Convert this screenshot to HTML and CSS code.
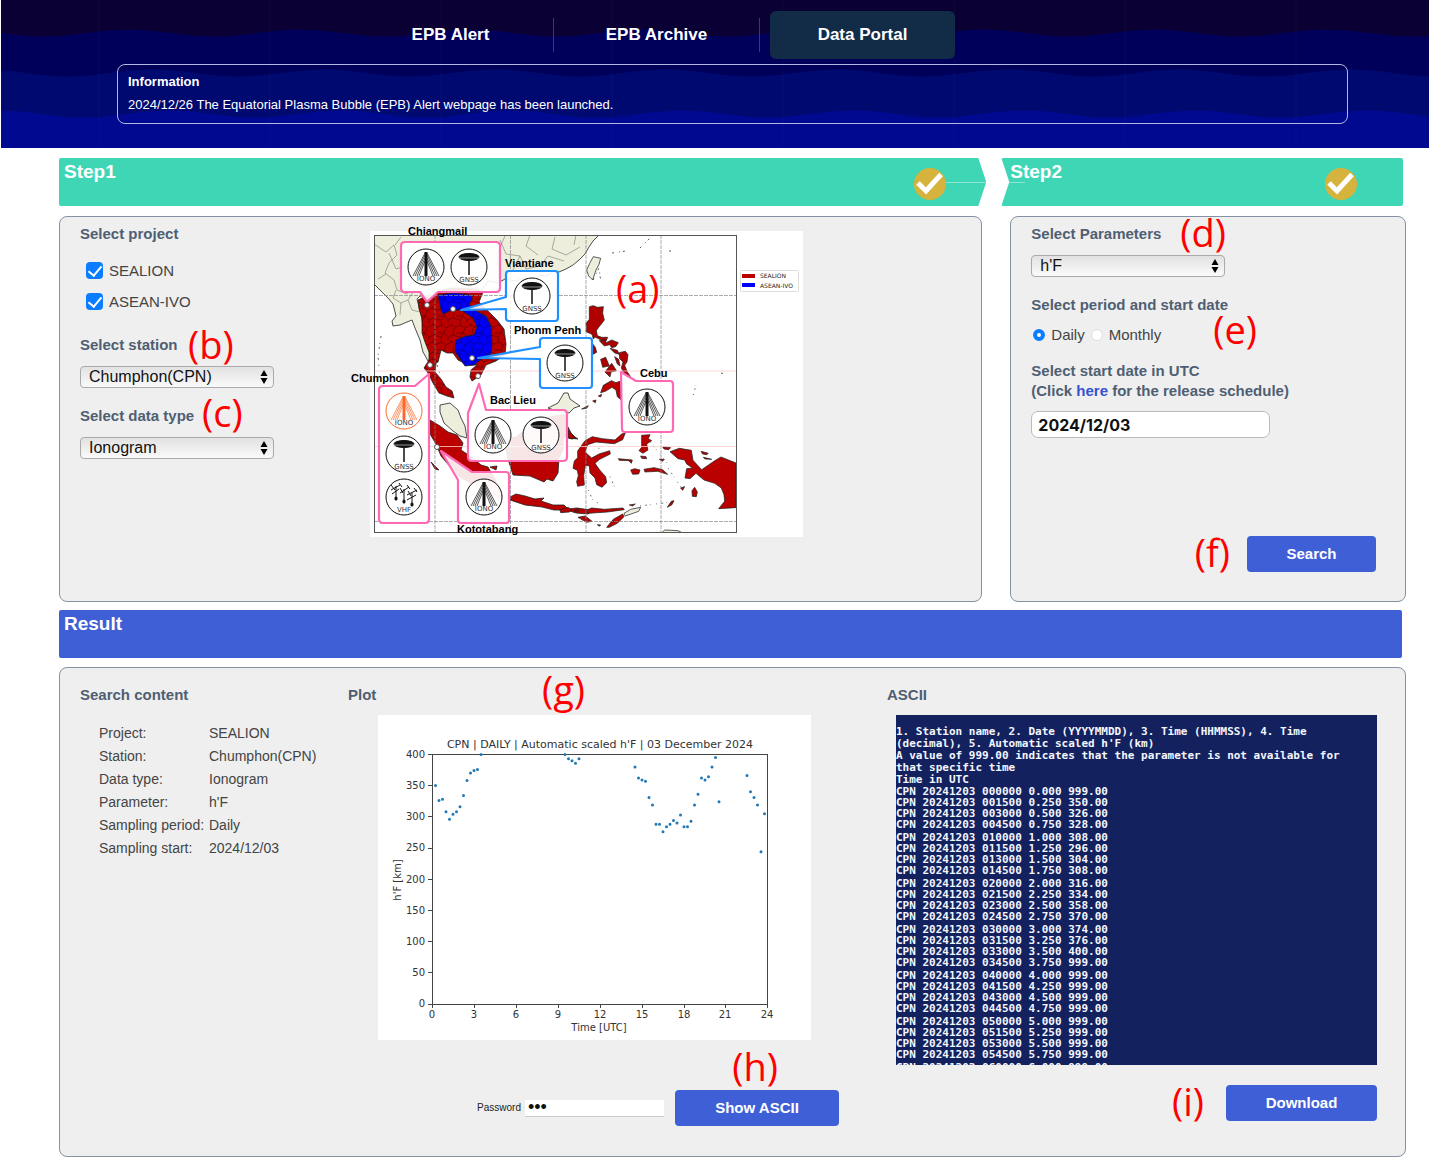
FILE: index.html
```html
<!DOCTYPE html>
<html lang="en">
<head>
<meta charset="utf-8">
<meta name="viewport" content="width=device-width, initial-scale=1">
<title>EPB Data Portal</title>
<link rel="stylesheet" href="styles.css">
</head>
<body>
<header class="masthead">
  <svg class="waves" aria-hidden="true">
    <defs>
      <pattern id="wave" width="171" height="148" patternUnits="userSpaceOnUse">
        <rect width="171" height="148" fill="#0b0033"/>
        <path fill="#00005a" d="M-86 33q42.75-7 85.5 0t85.5 0t85.5 0t85.5 0t85.5 0t85.5 0V148H-86z"/>
        <path fill="#000970" d="M-62 73q42.75-7 85.5 0t85.5 0t85.5 0t85.5 0t85.5 0t85.5 0V148H-62z"/>
        <path fill="#00098f" d="M-46 114q42.75-7 85.5 0t85.5 0t85.5 0t85.5 0t85.5 0t85.5 0V148H-46z"/>
        <path stroke="#fff" stroke-opacity=".025" d="M98 0V148"/>
      </pattern>
    </defs>
    <rect width="100%" height="100%" fill="url(#wave)"/>
  </svg>
  <nav class="nav">
    <a class="nav-link" href="#alert">EPB Alert</a>
    <a class="nav-link" href="#archive">EPB Archive</a>
    <a class="nav-link current" href="#portal">Data Portal</a>
  </nav>
  <section class="info">
    <h2>Information</h2>
    <p>2024/12/26 The Equatorial Plasma Bubble (EPB) Alert webpage has been launched.</p>
  </section>
</header>

<main class="portal" id="portal">
  <div class="steps">
    <div class="bar step-one">
      <h2>Step1</h2>
      <svg class="done" viewBox="0 0 32 32" aria-hidden="true"><circle cx="16" cy="16" r="16" fill="#d6b33c"/><path fill="none" stroke="#fff" stroke-width="5" d="M4 15l8 8L27 6.500"/></svg>
    </div>
    <div class="bar step-two">
      <h2>Step2</h2>
      <svg class="done" viewBox="0 0 32 32" aria-hidden="true"><circle cx="16" cy="16" r="16" fill="#d6b33c"/><path fill="none" stroke="#fff" stroke-width="5" d="M4 15l8 8L27 6.500"/></svg>
    </div>

    <form class="panel selection">
      <div class="fields">
        <h3>Select project</h3>
        <div class="checks">
          <label><input type="checkbox" checked>SEALION</label>
          <label><input type="checkbox" checked>ASEAN-IVO</label>
        </div>
        <label class="title" for="station">Select station</label>
        <div class="select">
          <select id="station"><option>Chumphon(CPN)</option></select>
          <svg viewBox="0 0 8 14" aria-hidden="true"><path d="M4 0l3.500 6h-7zM4 14l3.500-6h-7z"/></svg>
        </div>
        <label class="title" for="datatype">Select data type</label>
        <div class="select">
          <select id="datatype"><option>Ionogram</option></select>
          <svg viewBox="0 0 8 14" aria-hidden="true"><path d="M4 0l3.500 6h-7zM4 14l3.500-6h-7z"/></svg>
        </div>
      </div>
      <figure class="map">
        <svg viewBox="370 231 433 306" role="img" aria-label="Observation stations in Southeast Asia">
          <defs>
            <pattern id="redcells" width="19" height="17" patternUnits="userSpaceOnUse">
              <rect width="19" height="17" fill="#bb0000"/>
              <path fill="none" stroke="#400" stroke-width=".5" d="M0 4l5-2 4 3 5-3 5 2M5 2L4 0M9 5l-2 5 4 4 5-2 1-6 2-2M0 10l7 0M4 17l1-4 2-3M11 14v3M16 12l3 1M14 2l1-2M0 13l4 1"/>
            </pattern>
            <pattern id="bluecells" width="19" height="17" patternUnits="userSpaceOnUse">
              <rect width="19" height="17" fill="#0000fa"/>
              <path fill="none" stroke="#005" stroke-width=".5" d="M0 4l5-2 4 3 5-3 5 2M5 2L4 0M9 5l-2 5 4 4 5-2 1-6 2-2M0 10l7 0M4 17l1-4 2-3M11 14v3M16 12l3 1M14 2l1-2M0 13l4 1"/>
            </pattern>
            <clipPath id="frame"><rect x="374" y="235" width="363" height="298"/></clipPath>
            <g id="iono">
              <circle r="18" fill="#fff" fill-opacity=".8"/>
              <path fill="none" stroke-width=".7" d="M-1-14L-13 9M-1-12L-11 9M-1-9L-9 9M-1-6L-7 9M1-14L13 9M1-12L11 9M1-9L9 9M1-6L7 9"/>
              <path fill="none" stroke-width="3" d="M0-15V9"/>
              <text y="14" text-anchor="middle">IONO</text>
            </g>
            <g id="gnss">
              <circle r="18" fill="#fff" fill-opacity=".8"/>
              <ellipse cy="-10" rx="10" ry="3.500" fill="#111"/>
              <path stroke="#ccc" stroke-width=".7" d="M-10-9H10"/>
              <path stroke-width="1.500" d="M0-6V8"/>
              <text y="15" text-anchor="middle">GNSS</text>
            </g>
            <g id="vhf">
              <circle r="18" fill="#fff" fill-opacity=".8"/>
              <path fill="none" d="M-8-11V2M0-8V5M8-4V8M-13-7l9-5M-13-12l4 5M-5-14l3 4M-4-4l9-6M-4-9l3 5M3-12l3 4M3-2l10-5M4-6l3 5M10-9l3 4M-12-3l7-5M3 3l9-5"/>
              <path fill="none" stroke-width="3" stroke-linecap="round" d="M-8 1v1M0 4v1M8 7v1"/>
              <text y="15" text-anchor="middle">VHF</text>
            </g>
          </defs>

          <g clip-path="url(#frame)" stroke="#222" stroke-width=".8" stroke-linejoin="round">
            <path fill="#eeeedc" d="M374 234H600L593 241 589 247 585 254 579 260 573 265 566 269 559 272 554 271 547 276 540 275 535 279 526 278 515 281 505 279 498 283 488 281 480 293 420 296 417 299 420 310 424 330 427 345 431 357 428 361 423 352 420 340 415 328 412 320 407 322 400 325 393 326 392 321 396 316 393 304 388 298 381 291 374 284z"/>
            <path fill="none" stroke="#777" stroke-width=".6" d="M374 244l12 8 8-7 3 10-8 8-4 10 9 7 3 10 10 4 3-10 8-3 4-8M395 245l6-8M386 274l-8 5M396 290l-3 8 8 5 7-3 4 10 8 2M401 303l-1 12M408 300l6-10M500 240l6 14 14 2 6 13 14-3 8-10 16 5M530 235l-4 11 12 9M555 237l-3 12 14 6 14-8M505 236l-8 18 3 20M576 235l-2 10M520 256l-7 14M389 253l7 16 9-3"/>
            <path fill="url(#redcells)" d="M418 300l6-3 7 0 7-6 14-3 23 1 8 3-4 10 8 8 10 10 7 9 2 15-1 11-9 6-10 4-5 10-9 6-2-4 1-7 6-5-9 0-10-5-5-7-6 0-6-3-3 12-2 1-1 9 6 7 5 8 6 4 2 7-7-2-8-3-6-10-5-10-4-5 5-8 0-8-4-10-3-9 0-15-3-9z"/>
            <path fill="url(#bluecells)" d="M438 295l15-2 18 2 1 5-3 4 7 7 10 5 5 10 1 17-1 11-8 4-9 7-9 1-5-7-5-8 1-11 10-4 8-1 3-8-4-9-12-8-9 0-9 4-2-4z"/>
            <path fill="#eeeedc" d="M440 405l10-2 8 7 3 8 4 8 2 12-7-2-7-5-9-8-4-11z"/>
            <path fill="#bb0000" d="M430 420l10 6 8 6 9 3 6 8-2 7 12 8 8 7 7 2 7 12 8 17-3 4-18-10-24-14-17-20-5-12-6-10z"/>
            <path fill="#bb0000" d="M510 497l6-3 9 2 10 3 9-1-3 3 12 4 11 0 4 4 9-1 7 1 8 2-4 3-12-1-9-3-13 0-12-3-17-2-15-5zM431 462l8 8-4-1zM490 467l7-1-1 4zM504 438l12-1 12-10 20-10 18-3 0 14 10 10-4 1-8-2-1 13-4 8-1 15-5 8-6-2-3 3-14-6-17-1-5-16zM568 427l4 8 6 4-9-1z"/>
            <path fill="#eeeedc" d="M548 408l10-5 6-10 4 0 2 6 10 7-6 2-5 5-9-1z"/>
            <g transform="translate(560 220) scale(.3333)" stroke-width="2.200">
              <path fill="#eeeedc" d="M100 110l22 5-5 18-9 17-10 30-12-12-6-18 9-20z"/>
              <path fill="url(#redcells)" d="M88 260l12-3 12 5 18-2-2 20 5 20-9 12-8 10-7 10 3 15 13 5 18 0-5 12-13-3-20-10-5 6-4-14-18-8 1-12-1-13 10-12zM118 362l15-4 6 10 16-8 20 8-8 12-12 3-6-9-16 4zM178 398l18-4 8 10-3 22-7 10 8 20 14 20-18-6-14-26 5-18-10-10zM98 372l8 10 4 15-11 6zM122 418l15-6 6 14 5 12-20 4zM135 456l20-26 8 12 6 10-16 4-3 15zM164 410l12 8 4 20-8-6zM150 385l22 6 6 12-14-4z"/>
            </g>
            <g transform="translate(560 380) scale(.3333)" fill="#bb0000" stroke-width="2.200">
              <path d="M122 38l8-22 24-14 14 6 12-4 4 56-12-10-4-20-12-8-20 12zM98 63l10-3-2 8zM115 48l10-5-3 8zM65 87l20-10-5 8zM75 182l22-12 30 6 38 4 20-18 11-3-8 20-25 12-55-5-25 8-8 22 20 18 22-12 32-10 2 10-32 16-14 12 14 20 18 20 3 18-14 14-16-8-5-20-15-15-2-22-12 0-5 30 2 28-20 4-3-14 5-18-3-16-13-6 4-22 10-10 0-20zM245 166l25-2-5 12 10 6-15 10 4 18-15 10-12-8 8-10zM175 236l20 2 22 2-3 10-8-8-28-1zM242 228l16 2 2 6-15-1zM298 238l14 0-4 6zM212 270l12-4 16 4-4 12-18 1zM252 268l30-5 26 6 15 14-30-9-38 2zM308 200l24 3-6 6-14-2zM330 215l28-10 36 6 5 30 26 28 38-26 20-12 45 18v134l-52 3 18-22-2-20-8-20-20-14-32-10-24-20-18 16-15-2 5-28 18-2-18-12-6-12-20-4zM423 214l22 6-5 4-12-2zM430 232l25 6-20-1zM396 332l8-10 8 14-3 14-12-1zM362 324l12-4-6 11zM322 382l12-18 8-2-6 12zM0 390l24-8 12 8-8 6-26 2zM44 390l12-2 2 5-14 1zM75 392l20-8 38 4 56-4 4 5-50 7-58 4zM54 412l22-4 20 16-16 3zM140 442l20-24 28-16 4 8-20 20-24 12zM208 375l18-3-8 6zM112 434l10 1-4 4z"/>
              <path fill="#eeeedc" d="M192 400l20-12 30-6-6 12-40 14zM306 458l8-8 40 2 12 6z"/>
              <path fill="none" stroke="#333" stroke-dasharray="3 13 5 9 2 17" d="M240 378l80-10M270 185l60 75M325 265l40 60M85 330l15 35 20 5M150 290l20 45M400 45l8-30M115 205l15 0"/>
            </g>
            <path fill="none" stroke="#333" stroke-dasharray="2 5 1 3" d="M381 336l-3 20 1 12M593 280l6-12 2 15M612 253l14-2M640 248l12-12M669 251l3 0M437 365l3 9M721 373l4 1"/>
          </g>
          <g fill="none">
            <path stroke="#888" stroke-width=".7" stroke-dasharray="4 1" d="M435 235V533M510.500 235V533M586 235V533M661 235V533M374 295.500H737M374 521.500H737"/>
            <path stroke="#ffcaca" stroke-width=".8" d="M374 371H737M374 446.500H737"/>
            <rect x="374.500" y="235.500" width="362" height="297" stroke="#555"/>
          </g>

          <g fill="#fff" fill-opacity=".9" stroke-width="2.200" stroke-linejoin="round">
            <path stroke="#ff69b4" d="M405 242H496q4 0 4 4V288q0 4-4 4H438L427 302 420 292H405q-4 0-4-4V246q0-4 4-4z"/>
            <path stroke="#1e90ff" d="M509 271H555q3 0 3 3V318q0 3-3 3H509q-3 0-3-3V309L461 310 506 297V274q0-3 3-3z"/>
            <path stroke="#1e90ff" d="M543 338H589q3 0 3 3V385q0 3-3 3H543q-3 0-3-3V359L478 358 540 347V341q0-3 3-3z"/>
            <path stroke="#ff69b4" d="M382 386H415L429 374V519q0 4-4 4H383q-4 0-4-4V390q0-4 4-4z"/>
            <path stroke="#ff69b4" d="M486 410H563q4 0 4 4V457q0 4-4 4H472q-4 0-4-4V413L479 384z"/>
            <path stroke="#ff69b4" d="M636 381H670q3 0 3 3V429q0 3-3 3H625q-3 0-3-3L621 372z"/>
            <path stroke="#ff69b4" d="M472 472H506q3 0 3 3V520q0 3-3 3H461q-3 0-3-3V480L441 451z"/>
          </g>
          <g fill="#fff" stroke="#555">
            <circle cx="427" cy="305" r="2.500"/><circle cx="453" cy="309" r="2.500"/><circle cx="472" cy="358" r="2.500"/><circle cx="430" cy="365" r="2.500"/><circle cx="478" cy="376" r="2.500"/><circle cx="437" cy="447" r="2.500"/>
          </g>
          <g class="station-icons" stroke="#111">
            <use href="#iono" x="426" y="267"/><use href="#gnss" x="469" y="267"/>
            <use href="#gnss" x="532" y="296"/><use href="#gnss" x="565" y="363"/>
            <use href="#iono" x="404" y="411" class="active-icon"/><use href="#gnss" x="404" y="454"/><use href="#vhf" x="404" y="497"/>
            <use href="#iono" x="493" y="435"/><use href="#gnss" x="541" y="435"/>
            <use href="#iono" x="484" y="497"/><use href="#iono" x="647" y="407"/>
          </g>
          <g class="station-names">
            <text x="408" y="235">Chiangmail</text>
            <text x="505" y="267">Viantiane</text>
            <text x="514" y="334">Phonm Penh</text>
            <text x="351" y="382">Chumphon</text>
            <text x="640" y="377">Cebu</text>
            <text x="490" y="404">Bac Lieu</text>
            <text x="457" y="533">Kototabang</text>
          </g>
          <rect x="740.500" y="270.500" width="58" height="21" rx="1" fill="#fff" stroke="#ddd"/>
          <path fill="#bb0000" d="M742 274h13v4h-13z"/><path fill="#00f" d="M742 283h13v4h-13z"/>
          <g class="map-legend"><text x="760" y="278">SEALION</text><text x="760" y="288">ASEAN-IVO</text></g>
        </svg>
        <span class="mark mark-a">(a)</span>
      </figure>
      <span class="mark mark-b">(b)</span>
      <span class="mark mark-c">(c)</span>
    </form>

    <form class="panel parameters">
      <label class="title" for="parameter">Select Parameters</label>
      <div class="select">
        <select id="parameter"><option>h'F</option></select>
        <svg viewBox="0 0 8 14" aria-hidden="true"><path d="M4 0l3.500 6h-7zM4 14l3.500-6h-7z"/></svg>
      </div>
      <h3>Select period and start date</h3>
      <div class="radios">
        <label><input type="radio" name="period" checked>Daily</label>
        <label><input type="radio" name="period">Monthly</label>
      </div>
      <p class="title"><label for="start">Select start date in UTC</label><br>(Click <a href="#schedule">here</a> for the release schedule)</p>
      <input class="date" id="start" type="text" value="2024/12/03">
      <button class="button search" type="button">Search</button>
      <span class="mark mark-d">(d)</span>
      <span class="mark mark-e">(e)</span>
      <span class="mark mark-f">(f)</span>
    </form>
  </div>

  <div class="bar result-bar"><h2>Result</h2></div>

  <section class="panel result">
    <div>
      <h3>Search content</h3>
      <dl class="summary">
        <dt>Project:</dt><dd>SEALION</dd>
        <dt>Station:</dt><dd>Chumphon(CPN)</dd>
        <dt>Data type:</dt><dd>Ionogram</dd>
        <dt>Parameter:</dt><dd>h'F</dd>
        <dt>Sampling period:</dt><dd>Daily</dd>
        <dt>Sampling start:</dt><dd>2024/12/03</dd>
      </dl>
    </div>
    <div class="plot-column">
      <h3>Plot</h3>
      <svg class="plot" viewBox="378 715 433 325" role="img" aria-label="Automatic scaled h'F, 03 December 2024">
        <rect x="378" y="715" width="433" height="325" fill="#fff"/>
        <rect x="432.500" y="754.500" width="335" height="250" fill="none" stroke="#444"/>
        <path stroke="#444" d="M428 754.500h4M428 785.500h4M428 816.500h4M428 848.500h4M428 879.500h4M428 910.500h4M428 941.500h4M428 972.500h4M428 1004.500h4M432.500 1004v4M474.500 1004v4M516.500 1004v4M558.500 1004v4M600.500 1004v4M642.500 1004v4M684.500 1004v4M725.500 1004v4M767.500 1004v4"/>
        <g transform="translate(432 1004) scale(14 -.624)">
          <path class="readings" d="M.25 350h0M.5 326h0M.75 328h0M1 308h0M1.250 296h0M1.500 304h0M1.750 308h0M2 316h0M2.250 334h0M2.500 358h0M2.750 370h0M3 374h0M3.250 376h0M3.500 400h0M9.500 400h0M9.750 393h0M10 390h0M10.250 386h0M10.500 393h0M14.500 380h0M14.750 362h0M15 359h0M15.250 357h0M15.500 331h0M15.750 319h0M16 288h0M16.250 288h0M16.500 276h0M16.750 284h0M17 288h0M17.250 294h0M17.500 290h0M17.750 303h0M18 284h0M18.250 284h0M18.500 293h0M18.750 319h0M19 336h0M19.250 362h0M19.500 359h0M19.750 364h0M20 380h0M20.250 395h0M20.500 324h0M22.500 366h0M22.750 340h0M23 331h0M23.250 319h0M23.500 244h0M23.750 305h0"/>
        </g>
        <text class="plot-title" x="600" y="748">CPN | DAILY | Automatic scaled h'F | 03 December 2024</text>
        <g class="y-ticks"><text x="425" y="758">400</text><text x="425" y="789">350</text><text x="425" y="820">300</text><text x="425" y="851">250</text><text x="425" y="883">200</text><text x="425" y="914">150</text><text x="425" y="945">100</text><text x="425" y="976">50</text><text x="425" y="1007">0</text></g>
        <g class="x-ticks"><text x="432" y="1018">0</text><text x="474" y="1018">3</text><text x="516" y="1018">6</text><text x="558" y="1018">9</text><text x="600" y="1018">12</text><text x="642" y="1018">15</text><text x="684" y="1018">18</text><text x="725" y="1018">21</text><text x="767" y="1018">24</text><text x="599" y="1031">Time [UTC]</text><text transform="translate(401 880) rotate(-90)">h'F [km]</text></g>
      </svg>
      <form class="unlock">
        <label for="password">Password</label>
        <input id="password" type="password" value="abc">
        <button class="button" type="button">Show ASCII</button>
      </form>
      <span class="mark mark-g">(g)</span>
      <span class="mark mark-h">(h)</span>
    </div>
    <div class="ascii-column">
      <h3>ASCII</h3>
      <div class="listing">
<pre class="preamble">1. Station name, 2. Date (YYYYMMDD), 3. Time (HHMMSS), 4. Time
(decimal), 5. Automatic scaled h'F (km)
A value of 999.00 indicates that the parameter is not available for
that specific time
Time in UTC</pre>
<pre class="hour">CPN 20241203 000000 0.000 999.00
CPN 20241203 001500 0.250 350.00
CPN 20241203 003000 0.500 326.00
CPN 20241203 004500 0.750 328.00</pre>
<pre class="hour">CPN 20241203 010000 1.000 308.00
CPN 20241203 011500 1.250 296.00
CPN 20241203 013000 1.500 304.00
CPN 20241203 014500 1.750 308.00</pre>
<pre class="hour">CPN 20241203 020000 2.000 316.00
CPN 20241203 021500 2.250 334.00
CPN 20241203 023000 2.500 358.00
CPN 20241203 024500 2.750 370.00</pre>
<pre class="hour">CPN 20241203 030000 3.000 374.00
CPN 20241203 031500 3.250 376.00
CPN 20241203 033000 3.500 400.00
CPN 20241203 034500 3.750 999.00</pre>
<pre class="hour">CPN 20241203 040000 4.000 999.00
CPN 20241203 041500 4.250 999.00
CPN 20241203 043000 4.500 999.00
CPN 20241203 044500 4.750 999.00</pre>
<pre class="hour">CPN 20241203 050000 5.000 999.00
CPN 20241203 051500 5.250 999.00
CPN 20241203 053000 5.500 999.00
CPN 20241203 054500 5.750 999.00</pre>
<pre class="hour">CPN 20241203 060000 6.000 999.00</pre>
      </div>
      <button class="button download" type="button">Download</button>
      <span class="mark mark-i">(i)</span>
    </div>
  </section>
</main>
</body>
</html>
```
FILE: styles.css
```css
* {
  box-sizing: border-box;
}

body {
  margin: 0;
  background: #fff;
  color: #444;
  font: 15px/20px "Liberation Sans", Arial, sans-serif;
}

h2,
h3,
p,
dl,
dd,
pre,
figure {
  margin: 0;
}

/* Masthead */

.masthead {
  position: relative;
  margin: 0 1px;
  padding: 11px 81px 24px 116px;
  color: #fff;
}

.waves {
  position: absolute;
  inset: 0;
  z-index: -1;
  width: 100%;
  height: 100%;
}

.nav {
  display: flex;
  justify-content: center;
  margin-right: 152px;
}

.nav-link {
  position: relative;
  width: 185px;
  border-radius: 6px;
  color: #fff;
  font-size: 17px;
  font-weight: bold;
  line-height: 48px;
  text-align: center;
  text-decoration: none;
}

.nav-link + .nav-link {
  margin-left: 21px;
}

.nav-link + .nav-link::before {
  position: absolute;
  top: 7px;
  left: -11px;
  width: 1px;
  height: 34px;
  background: #2e3a8c;
  content: "";
}

.current {
  background: #122b47;
}

.info {
  margin-top: 5px;
  padding: 5px 10px 7px;
  border: 1px solid #b4b8e0;
  border-radius: 8px;
  font-size: 13px;
  line-height: 23px;
}

.info h2 {
  font-size: 13px;
}

/* Step bars and panels */

.portal {
  padding: 10px 24px 18px 59px;
}

.steps {
  display: grid;
  grid-template-columns: minmax(0, 7fr) minmax(0, 3fr);
  gap: 10px 28px;
}

.bar {
  position: relative;
  height: 48px;
  padding: 3px 5px;
  border-radius: 2px;
  background: #3fd6b6;
  color: #fff;
}

.bar h2 {
  font-size: 19px;
  line-height: 22px;
}

.step-one {
  margin-right: -4px;
  clip-path: polygon(0 0, calc(100% - 8px) 0, 100% 50%, calc(100% - 8px) 100%, 0 100%);
}

.step-two {
  margin: 0 3px 0 -9px;
  padding-left: 9px;
  clip-path: polygon(0 0, 100% 0, 100% 100%, 0 100%, 8px 50%);
}

.step-one::after,
.step-two::after {
  position: absolute;
  top: 24px;
  height: 1px;
  background: #8ce5d2;
  content: "";
}

.step-one::after {
  right: 0;
  width: 40px;
}

.step-two::after {
  left: 0;
  width: 24px;
}

.done {
  position: absolute;
  top: 10px;
  right: 40px;
  width: 32px;
  height: 32px;
}

.step-two .done {
  right: 46px;
}

.panel {
  position: relative;
  border: 1px solid #8592a3;
  border-radius: 8px;
  background: #efefef;
}

.panel h3,
.title {
  display: block;
  color: #4f5f73;
  font-size: 15px;
  font-weight: bold;
  line-height: 20px;
}

.title a {
  color: #3453d0;
  text-decoration: none;
}

.selection {
  display: flex;
  min-height: 386px;
  padding: 7px 20px;
}

.fields {
  flex: 0 0 290px;
}

.checks {
  display: grid;
  margin: 11px 0 18px 6px;
}

.checks label {
  display: flex;
  align-items: center;
  gap: 6px;
  height: 31px;
}

.checks input {
  display: grid;
  width: 17px;
  height: 17px;
  margin: 0;
  border-radius: 4px;
  background: #0a7cff;
  appearance: none;
  place-items: center;
}

.checks input::before {
  width: 6px;
  height: 11px;
  margin-bottom: 3px;
  border: solid #fff;
  border-width: 0 2px 2px 0;
  transform: rotate(40deg);
  content: "";
}

.select {
  position: relative;
  width: 194px;
  margin: 11px 0 18px;
}

.select select {
  display: block;
  width: 100%;
  height: 22px;
  padding: 0 8px;
  border: 1px solid #aaa;
  border-radius: 4px;
  background: linear-gradient(#e2e2e2, #fafafa);
  color: #111;
  font: 16px/20px "Liberation Sans", Arial, sans-serif;
  appearance: none;
}

.select svg {
  position: absolute;
  top: 4px;
  right: 6px;
  width: 8px;
  height: 14px;
  pointer-events: none;
}

/* Station map */

.map {
  position: relative;
  width: 433px;
  padding-top: 7px;
}

.map > svg {
  display: block;
  width: 100%;
  overflow: visible;
  background: #fff;
}

.station-icons {
  font: 7px "DejaVu Sans", sans-serif;
}

#iono text,
#gnss text,
#vhf text {
  fill: #333;
  stroke: none;
}

.active-icon {
  stroke: #ff6a2a;
}

.station-names {
  fill: #000;
  font: bold 11px "Liberation Sans", Arial, sans-serif;
}

.map-legend {
  fill: #222;
  font: 6px "DejaVu Sans", sans-serif;
}

/* Parameters */

.parameters {
  display: flex;
  flex-direction: column;
  align-items: flex-start;
  padding: 7px 29px 29px 20px;
}

.radios {
  display: flex;
  gap: 6px;
  margin: 10px 0 16px;
}

.radios label {
  display: flex;
  align-items: center;
  gap: 6px;
}

.radios input {
  width: 12px;
  height: 12px;
  margin: 0;
  border: 1px solid #ddd;
  border-radius: 50%;
  background: #fff;
  appearance: none;
}

.radios input:checked {
  border: 4px solid #0a7cff;
}

.radios label:first-child {
  padding-left: 2px;
}

.date {
  width: 239px;
  height: 27px;
  margin-top: 10px;
  padding: 0 6px;
  border: 1px solid #bbb;
  border-radius: 7px;
  background: #fff;
  color: #111;
  font: bold 16px/20px Inter, sans-serif;
}

.button {
  height: 36px;
  border: 0;
  border-radius: 4px;
  background: #3f5fd7;
  color: #fff;
  font: bold 15px/20px "Liberation Sans", Arial, sans-serif;
}

.search {
  align-self: flex-end;
  width: 129px;
  margin-top: auto;
}

/* Result */

.result-bar {
  margin: 8px 4px 9px 0;
  background: #3f5fd7;
}

.result {
  display: grid;
  grid-template-columns: 268px minmax(0, 11fr) minmax(0, 10fr);
  padding: 17px 28px 30px 20px;
}

.summary {
  display: grid;
  grid-template-columns: 110px 1fr;
  margin: 17px 0 0 19px;
  font-size: 14px;
  line-height: 23px;
}

.plot-column,
.ascii-column {
  position: relative;
}

.plot {
  display: block;
  width: 433px;
  margin: 10px 0 50px 30px;
}

.plot text {
  fill: #333;
  font: 10px "DejaVu Sans", sans-serif;
}

.plot .plot-title {
  font-size: 11px;
  text-anchor: middle;
}

.y-ticks {
  text-anchor: end;
}

.x-ticks {
  text-anchor: middle;
}

.readings {
  fill: none;
  stroke: #1f77b4;
  stroke-width: 3px;
  stroke-linecap: round;
  vector-effect: non-scaling-stroke;
}

.unlock {
  display: flex;
  align-items: center;
  justify-content: flex-end;
  margin-right: 48px;
}

.unlock label {
  margin-right: 4px;
  color: #222;
  font-size: 10px;
}

.unlock input {
  width: 139px;
  height: 17px;
  margin-right: 11px;
  padding: 0 3px;
  border: 0;
  border-bottom: 1px solid #ccc;
  background: #fff;
  color: #111;
  font: 18px/16px "Liberation Sans", Arial, sans-serif;
}

.unlock .button {
  width: 164px;
}

.listing {
  height: 350px;
  margin: 10px 0 20px 9px;
  padding-top: 11px;
  overflow: hidden;
  background: #13225e;
  color: #f4f6ff;
}

.listing pre {
  font: bold 11px/11px "DejaVu Sans Mono", monospace;
}

.listing .preamble {
  line-height: 12px;
}

.listing .hour {
  margin-bottom: 2px;
}

.download {
  display: block;
  width: 151px;
  margin-left: auto;
}

/* Red reference letters laid over the page */

.mark {
  position: absolute;
  color: #f00;
  font: 38px/40px "Open Sans", sans-serif;
}

.mark-a {
  top: 44px;
  left: 246px;
}

.mark-b {
  top: 107px;
  left: 128px;
}

.mark-c {
  top: 175px;
  left: 142px;
}

.mark-d {
  top: -5px;
  left: 169px;
}

.mark-e {
  top: 92px;
  left: 202px;
}

.mark-f {
  right: 175px;
  bottom: 29px;
}

.mark-g {
  top: -16px;
  left: 194px;
}

.mark-h {
  right: 109px;
  bottom: 40px;
}

.mark-i {
  right: 173px;
  bottom: 5px;
}
```
